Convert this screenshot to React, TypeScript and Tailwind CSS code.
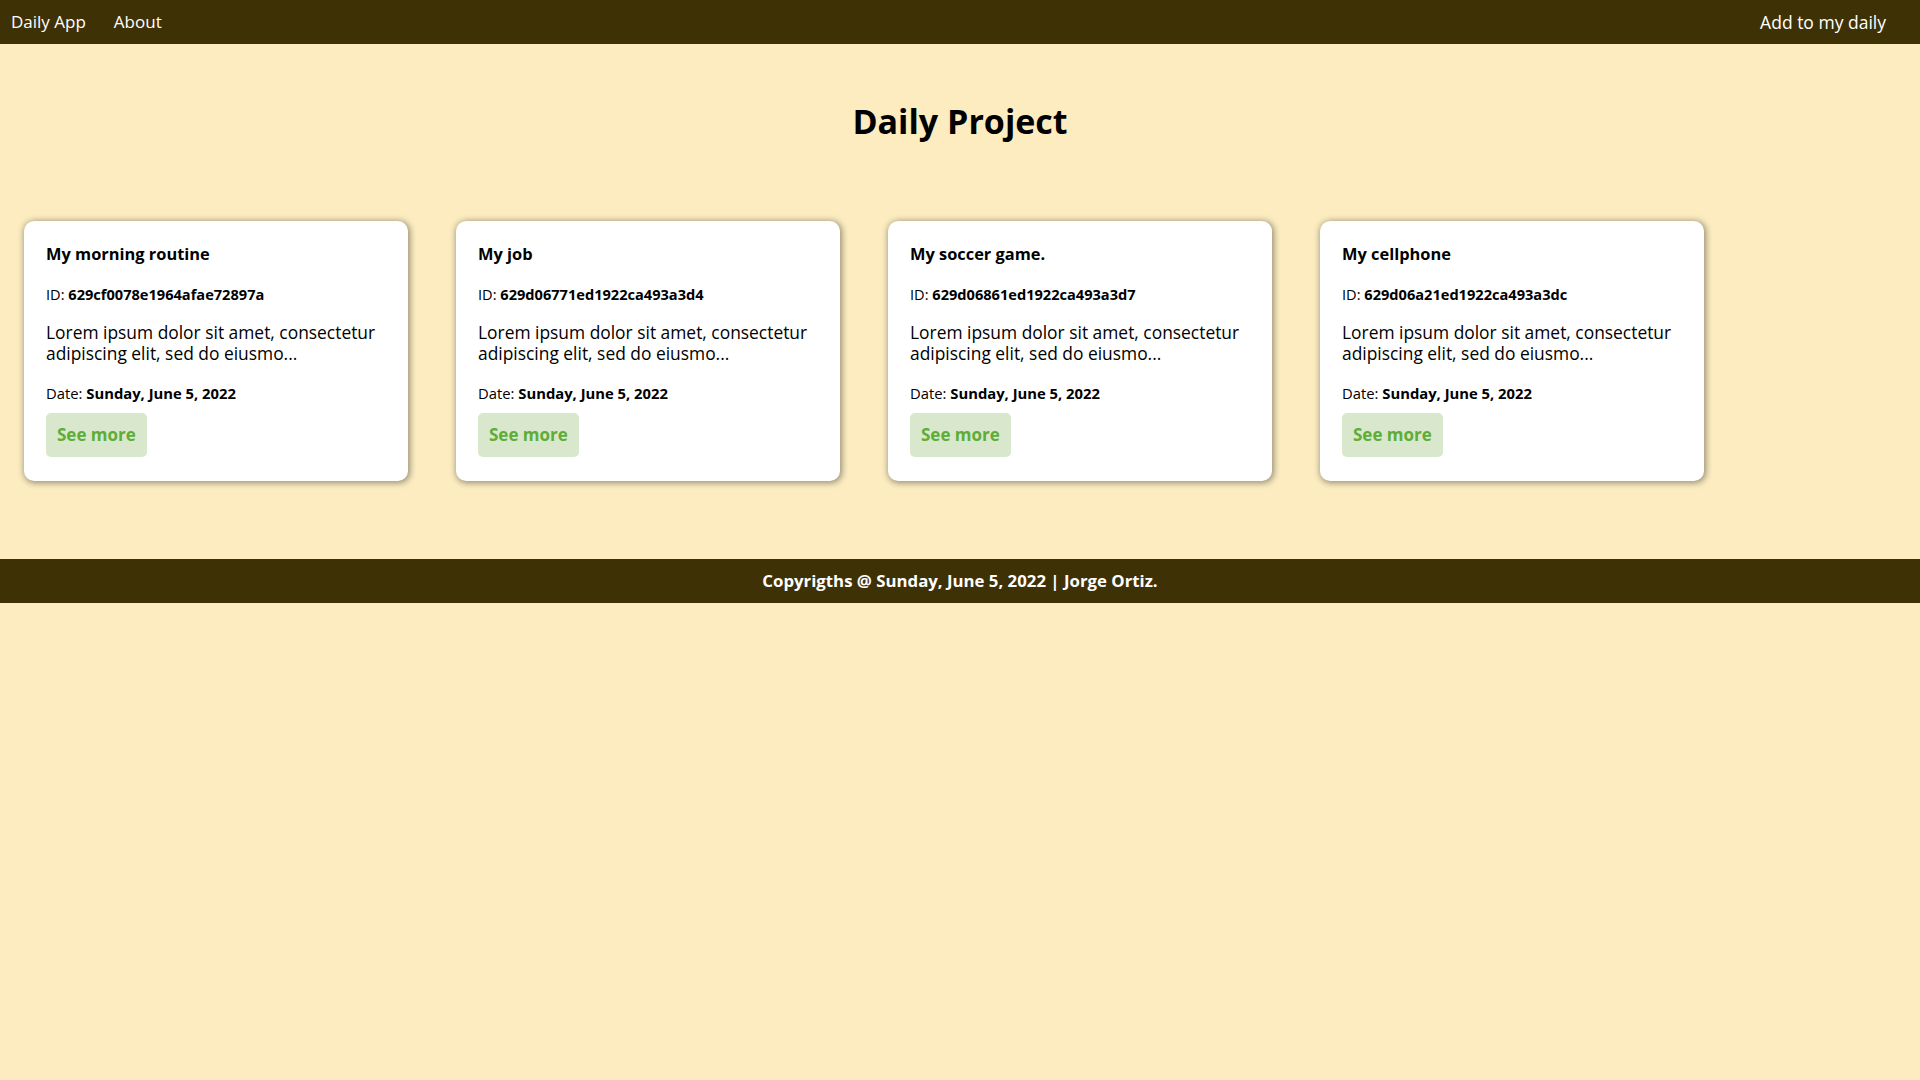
import React from 'react';

interface DailyItem {
  id: string;
  title: string;
  description: string;
  date: string;
}

const ITEMS: DailyItem[] = [
  {
    id: '629cf0078e1964afae72897a',
    title: 'My morning routine',
    description: 'Lorem ipsum dolor sit amet, consectetur adipiscing elit, sed do eiusmo...',
    date: 'Sunday, June 5, 2022',
  },
  {
    id: '629d06771ed1922ca493a3d4',
    title: 'My job',
    description: 'Lorem ipsum dolor sit amet, consectetur adipiscing elit, sed do eiusmo...',
    date: 'Sunday, June 5, 2022',
  },
  {
    id: '629d06861ed1922ca493a3d7',
    title: 'My soccer game.',
    description: 'Lorem ipsum dolor sit amet, consectetur adipiscing elit, sed do eiusmo...',
    date: 'Sunday, June 5, 2022',
  },
  {
    id: '629d06a21ed1922ca493a3dc',
    title: 'My cellphone',
    description: 'Lorem ipsum dolor sit amet, consectetur adipiscing elit, sed do eiusmo...',
    date: 'Sunday, June 5, 2022',
  },
];

const DailyCard = ({ item }: { item: DailyItem }) => {
  return (
    <div className="m-[24px] w-[384px] h-[260px] bg-white rounded-[10px] shadow-[1px_1px_6px_1px_rgba(0,0,0,0.4)] px-[22px] pt-[21px] text-black">
      <h3 className="text-[16.4px] font-bold leading-[24px]">{item.title}</h3>
      <p className="mt-[18px] text-[14.6px] leading-[20px]">
        ID: <span className="font-bold">{item.id}</span>
      </p>
      <p className="mt-[18px] text-[17.4px] leading-[21px]">{item.description}</p>
      <p className="mt-[19px] text-[14.8px] leading-[20px]">
        Date: <span className="font-bold">{item.date}</span>
      </p>
      <button className="mt-[10px] h-[44px] px-[11px] rounded-[5px] bg-[#d9e8cd] text-[#5ead37] text-[17px] font-bold">
        See more
      </button>
    </div>
  );
};

export default function App() {
  return (
    <div className="min-h-screen bg-[#fcecc0] font-['Open_Sans',sans-serif]">
      <nav className="h-[44px] bg-[#3f3106] flex items-center justify-between pl-[11px] pr-[34px] text-white text-[17px]">
        <div className="flex items-center gap-[28px]">
          <a>Daily App</a>
          <a>About</a>
        </div>
        <a className="text-[17.5px]">Add to my daily</a>
      </nav>

      <main>
        <h1 className="text-center text-[34px] font-bold text-black leading-[44px] pt-[55px]">
          Daily Project
        </h1>
        <div className="flex flex-wrap pt-[54px] pb-[54px]">
          {ITEMS.map((item) => (
            <DailyCard key={item.id} item={item} />
          ))}
        </div>
      </main>

      <footer className="h-[44px] bg-[#3f3106] flex items-center justify-center text-white text-[16.8px] font-bold">
        Copyrigths @ Sunday, June 5, 2022 | Jorge Ortiz.
      </footer>
    </div>
  );
}
